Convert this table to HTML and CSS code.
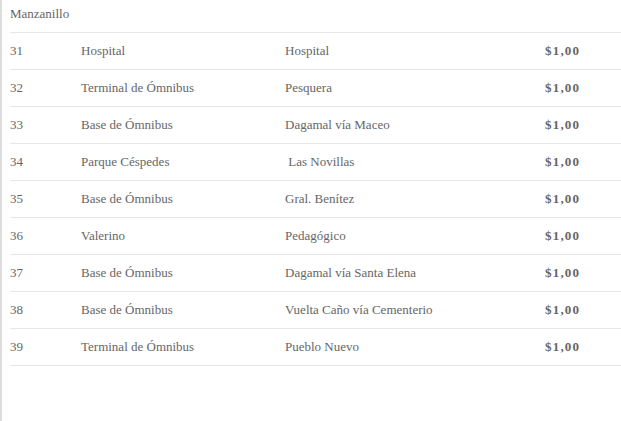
FILE: index.html
```html
<!DOCTYPE html>
<html lang="es">
<head>
<meta charset="utf-8">
<link rel="stylesheet" href="styles.css">
</head>
<body>
<div class="page">
  <div class="city">Manzanillo</div>
  <table class="routes">
    <tr><td class="num">31</td><td class="from">Hospital</td><td class="to">Hospital</td><td class="price">$1,00</td></tr>
    <tr><td class="num">32</td><td class="from">Terminal de Ómnibus</td><td class="to">Pesquera</td><td class="price">$1,00</td></tr>
    <tr><td class="num">33</td><td class="from">Base de Ómnibus</td><td class="to">Dagamal vía Maceo</td><td class="price">$1,00</td></tr>
    <tr><td class="num">34</td><td class="from">Parque Céspedes</td><td class="to">&nbsp;Las Novillas</td><td class="price">$1,00</td></tr>
    <tr><td class="num">35</td><td class="from">Base de Ómnibus</td><td class="to">Gral. Benítez</td><td class="price">$1,00</td></tr>
    <tr><td class="num">36</td><td class="from">Valerino</td><td class="to">Pedagógico</td><td class="price">$1,00</td></tr>
    <tr><td class="num">37</td><td class="from">Base de Ómnibus</td><td class="to">Dagamal vía Santa Elena</td><td class="price">$1,00</td></tr>
    <tr><td class="num">38</td><td class="from">Base de Ómnibus</td><td class="to">Vuelta Caño vía Cementerio</td><td class="price">$1,00</td></tr>
    <tr><td class="num">39</td><td class="from">Terminal de Ómnibus</td><td class="to">Pueblo Nuevo</td><td class="price">$1,00</td></tr>
  </table>
</div>
</body>
</html>
```
FILE: styles.css
```css
html, body {
  margin: 0;
  padding: 0;
  background: #fff;
}
body {
  font-family: "Liberation Serif", "DejaVu Serif", serif;
  font-size: 13px;
  color: #666;
}
.page {
  border-left: 2px solid #ddd;
  height: 421px;
  box-sizing: border-box;
  padding-left: 8px;
}
.city {
  height: 32px;
  line-height: 28px;
}
.routes {
  width: 100%;
  border-collapse: collapse;
}
.routes td {
  border-top: 1px solid #e6e6e6;
  height: 36px;
  padding: 0;
  vertical-align: middle;
  white-space: nowrap;
}
.routes tr:last-child td {
  border-bottom: 1px solid #e6e6e6;
}
.num { width: 71px; }
.from { width: 204px; }
.to { width: 260px; }
.price {
  font-weight: bold;
  letter-spacing: 1.2px;
}
```
